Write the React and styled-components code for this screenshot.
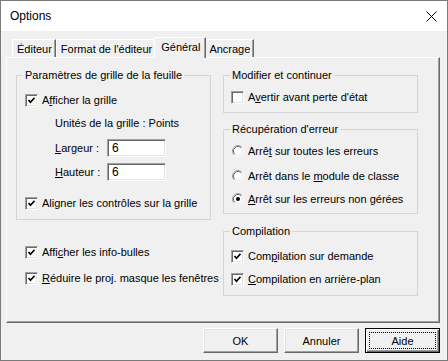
import React from 'react'
import styled, { createGlobalStyle, css } from 'styled-components'

const GlobalStyle = createGlobalStyle`
  html, body { margin: 0; padding: 0; background: #f0f0f0; }
  body {
    font-family: "Liberation Sans", Arial, sans-serif;
    font-size: 11px;
    color: #000;
  }
  * { box-sizing: border-box; }
`

const Window = styled.div`
  width: 448px;
  height: 361px;
  border: 1px solid #7a7a7a;
  background: #f0f0f0;
  display: flex;
  flex-direction: column;
`

const TitleBar = styled.div`
  height: 30px;
  flex: none;
  background: #fff;
  display: flex;
  align-items: center;
  justify-content: space-between;
  padding: 0 10px 0 9px;
  font-size: 12px;
`

const Body = styled.div`
  flex: 1;
  display: flex;
  flex-direction: column;
  padding: 6px 7px 0 5px;
`

const TabStrip = styled.div`
  height: 21px;
  display: flex;
  align-items: flex-end;
  padding-left: 6px;
  position: relative;
  z-index: 1;
`

const Tab = styled.div`
  height: 18px;
  margin-bottom: 1px;
  padding: 0 3px 0 4px;
  display: flex;
  align-items: center;
  background: #f0f0f0;
  border-top: 1px solid #fff;
  border-left: 1px solid #fff;
  border-right: 1px solid #696969;
  box-shadow: inset -1px 0 0 #a0a0a0;
  white-space: nowrap;
  ${p => p.$active && css`
    height: 21px;
    margin: 0 -2px;
    padding: 0 5px 2px 6px;
    position: relative;
    z-index: 2;
  `}
`

const Panel = styled.div`
  margin-top: -1px;
  height: 266px;
  flex: none;
  border: 1px solid;
  border-color: #fff #696969 #696969 #fff;
  box-shadow: inset -1px -1px 0 #a0a0a0;
  display: grid;
  grid-template-columns: 195px 195px;
  column-gap: 12px;
  align-items: start;
  padding: 10px 0 0 9px;
`

const Column = styled.div`
  display: flex;
  flex-direction: column;
`

const Group = styled.fieldset`
  margin: ${p => p.$mt || 0}px 0 0;
  padding: 0;
  border: 1px solid #d5d5d5;
  min-width: 0;
`

const Legend = styled.legend`
  margin-left: 6px;
  padding: 0 2px;
  height: 14px;
  line-height: 14px;
`

const GroupBody = styled.div`
  padding: ${p => p.$pad};
  display: flex;
  flex-direction: column;
`

const Row = styled.div`
  display: flex;
  align-items: center;
  gap: 4px;
  height: ${p => p.$h || 20}px;
  margin-top: ${p => p.$mt || 0}px;
  padding-left: ${p => p.$indent || 0}px;
  white-space: nowrap;
`

const FieldLabel = styled.span`
  width: 52px;
  flex: none;
`

const TextBox = styled.input`
  width: 59px;
  height: 18px;
  margin: 0 0 0 -4px;
  padding: 0 0 0 4px;
  font: inherit;
  font-size: 12px;
  background: #fff;
  border: 1px solid;
  border-color: #a0a0a0 #fff #fff #a0a0a0;
  box-shadow: inset 1px 1px 0 #696969, inset -1px -1px 0 #e3e3e3;
  outline: none;
`

const Box = styled.span`
  width: 13px;
  height: 13px;
  flex: none;
  background: #fff;
  border: 1px solid;
  border-color: #a0a0a0 #fff #fff #a0a0a0;
  box-shadow: inset 1px 1px 0 #696969, inset -1px -1px 0 #e3e3e3;
  display: flex;
  align-items: center;
  justify-content: center;
`

const Key = styled.span`
  text-decoration: underline;
`

const ButtonRow = styled.div`
  display: flex;
  justify-content: flex-end;
  gap: 6px;
  margin-top: 5px;
`

const Button = styled.button`
  width: 75px;
  height: 25px;
  margin: 0;
  padding: 0;
  font: inherit;
  color: #000;
  background: #f0f0f0;
  border: 1px solid;
  border-color: #fff #696969 #696969 #fff;
  box-shadow: inset -1px -1px 0 #a0a0a0, inset 1px 1px 0 #e3e3e3;
  position: relative;
  ${p => p.$default && css`
    border-color: #000;
    box-shadow: inset 1px 1px 0 #fff, inset -1px -1px 0 #696969, inset -2px -2px 0 #a0a0a0;
    &::after {
      content: '';
      position: absolute;
      inset: 3px;
      border: 1px dotted #000;
    }
  `}
`

const Check = ({ checked }) => (
  <Box>
    {checked && (
      <svg width="9" height="9" viewBox="0 0 9 9">
        <polyline points="1.5,4 3.5,6.2 7.5,1.8" fill="none" stroke="#000" strokeWidth="1.7" />
      </svg>
    )}
  </Box>
)

const Radio = ({ checked }) => (
  <svg width="12" height="12" viewBox="0 0 12 12" style={{ flex: 'none' }}>
    <circle cx="6" cy="6" r="5" fill="#fff" />
    <path d="M2.11 9.89 A5.5 5.5 0 0 1 9.89 2.11" fill="none" stroke="#a0a0a0" />
    <path d="M9.89 2.11 A5.5 5.5 0 0 1 2.11 9.89" fill="none" stroke="#fff" />
    <path d="M2.82 9.18 A4.5 4.5 0 0 1 9.18 2.82" fill="none" stroke="#696969" />
    <path d="M9.18 2.82 A4.5 4.5 0 0 1 2.82 9.18" fill="none" stroke="#e3e3e3" />
    {checked && <circle cx="6" cy="6" r="2" fill="#000" />}
  </svg>
)

const CloseIcon = () => (
  <svg width="11" height="11" viewBox="0 0 11 11">
    <path d="M0.5 0.5 L10.5 10.5 M10.5 0.5 L0.5 10.5" stroke="#000" strokeWidth="1" />
  </svg>
)

export default function App() {
  return (
    <>
      <GlobalStyle />
      <Window>
        <TitleBar>
          <span>Options</span>
          <CloseIcon />
        </TitleBar>
        <Body>
          <TabStrip>
            <Tab>Éditeur</Tab>
            <Tab>Format de l'éditeur</Tab>
            <Tab $active>Général</Tab>
            <Tab>Ancrage</Tab>
          </TabStrip>
          <Panel>
            <Column>
              <Group>
                <Legend>Paramètres de grille de la feuille</Legend>
                <GroupBody $pad="8px 0 6px 8px">
                  <Row><Check checked /><span>A<Key>f</Key>ficher la grille</span></Row>
                  <Row $mt={3} $indent={30}>Unités de la grille : Points</Row>
                  <Row $mt={6} $h={18} $indent={30}>
                    <FieldLabel><Key>L</Key>argeur :</FieldLabel>
                    <TextBox readOnly value="6" />
                  </Row>
                  <Row $mt={6} $h={18} $indent={30}>
                    <FieldLabel><Key>H</Key>auteur :</FieldLabel>
                    <TextBox readOnly value="6" />
                  </Row>
                  <Row $mt={12}><Check checked /><span>Aligner les contrôles sur la grille</span></Row>
                </GroupBody>
              </Group>
              <Row $mt={22} $indent={9}><Check checked /><span>Affi<Key>c</Key>her les info-bulles</span></Row>
              <Row $mt={6} $indent={9}><Check checked /><span><Key>R</Key>éduire le proj. masque les fenêtres</span></Row>
            </Column>
            <Column>
              <Group>
                <Legend>Modifier et continuer</Legend>
                <GroupBody $pad="5px 0 5px 7px">
                  <Row><Check /><span>A<Key>v</Key>ertir avant perte d'état</span></Row>
                </GroupBody>
              </Group>
              <Group $mt={9}>
                <Legend>Récupération d'erreur</Legend>
                <GroupBody $pad="5px 0 4px 8px">
                  <Row><Radio /><span>Arrê<Key>t</Key> sur toutes les erreurs</span></Row>
                  <Row $mt={5}><Radio /><span>Arrêt dans le <Key>m</Key>odule de classe</span></Row>
                  <Row $mt={3}><Radio checked /><span><Key>A</Key>rrêt sur les erreurs non gérées</span></Row>
                </GroupBody>
              </Group>
              <Group $mt={10}>
                <Legend>Compilation</Legend>
                <GroupBody $pad="8px 0 6px 7px">
                  <Row><Check checked /><span>Com<Key>p</Key>ilation sur demande</span></Row>
                  <Row $mt={3}><Check checked /><span><Key>C</Key>ompilation en arrière-plan</span></Row>
                </GroupBody>
              </Group>
            </Column>
          </Panel>
          <ButtonRow>
            <Button>OK</Button>
            <Button>Annuler</Button>
            <Button $default>Aide</Button>
          </ButtonRow>
        </Body>
      </Window>
    </>
  )
}
